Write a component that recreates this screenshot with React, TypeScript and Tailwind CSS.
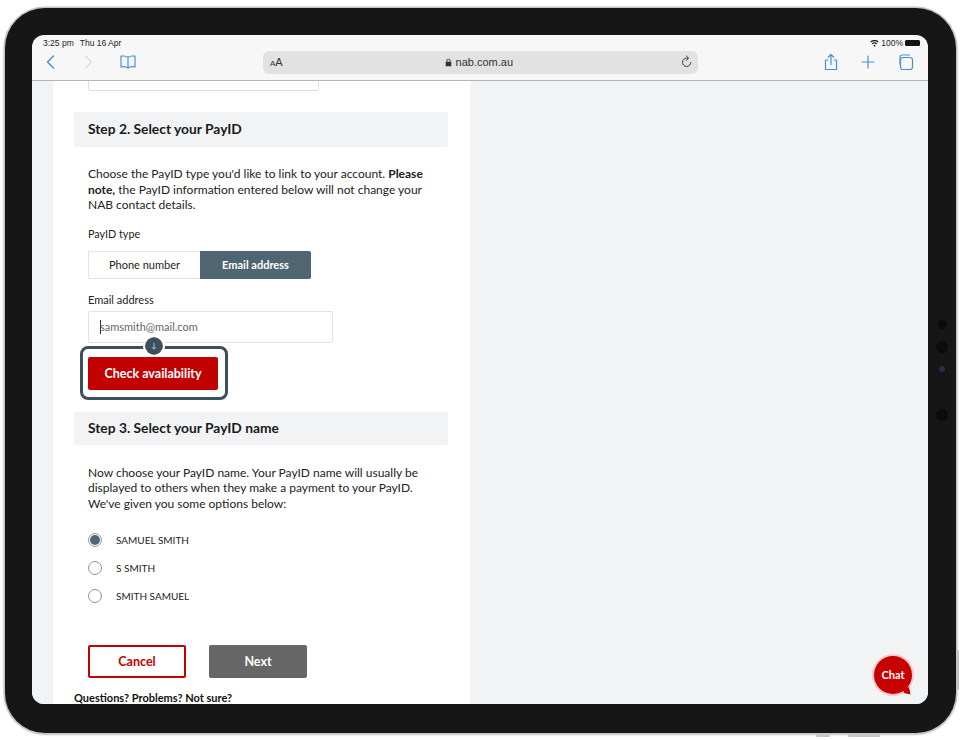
const FONT = "font-['Lato','Noto_Sans',sans-serif]"

function SafariIcon({ children, className }: { children: React.ReactNode; className?: string }) {
  return (
    <svg viewBox="0 0 20 20" fill="none" stroke="currentColor" strokeWidth="1.2" strokeLinecap="round" strokeLinejoin="round" className={className}>
      {children}
    </svg>
  )
}

function StatusBar() {
  return (
    <div className="flex h-[15px] items-center justify-between pl-[11px] pr-[8px] pt-[1px] font-['Liberation_Sans',sans-serif] text-[8.500px] text-[#222]">
      <div className="flex gap-[6px]">
        <span>3:25 pm</span>
        <span>Thu 16 Apr</span>
      </div>
      <div className="flex items-center gap-[2px]">
        <svg viewBox="0 0 12 10" className="h-[7px] w-[9px]" fill="#222">
          <path d="M6 9.500 4.300 7.400a2.600 2.600 0 0 1 3.400 0zM3.300 6.200 2.100 4.800a6 6 0 0 1 7.800 0L8.700 6.200a4.200 4.200 0 0 0-5.400 0zM1.200 3.700 0 2.300a9.200 9.200 0 0 1 12 0l-1.200 1.400a7.400 7.400 0 0 0-9.600 0z" />
        </svg>
        <span>100%</span>
        <span className="h-[6px] w-[15px] rounded-[1.500px] bg-[#111]" />
      </div>
    </div>
  )
}

function Toolbar() {
  return (
    <div className="flex h-[31px] items-center border-b border-[#b5b5b5] bg-[#f7f7f7] pb-[6px] text-[#4a90d9]">
      <div className="flex w-[231px] items-center pl-[9px]">
        <SafariIcon className="h-[20px] w-[20px]">
          <path d="M12.500 4 6.500 10l6 6" strokeWidth="1.500" />
        </SafariIcon>
        <SafariIcon className="ml-[17px] h-[20px] w-[20px] text-[#dcdcdc]">
          <path d="M7.500 4l6 6-6 6" strokeWidth="1.500" />
        </SafariIcon>
        <SafariIcon className="ml-[20px] h-[20px] w-[20px]">
          <path d="M10 5.500C8.500 4 5.500 3.800 3 4.200v10.600c2.500-.4 5.500-.2 7 1.200 1.500-1.400 4.500-1.600 7-1.200V4.200C14.500 3.800 11.500 4 10 5.500zM10 5.500V16" />
        </SafariIcon>
      </div>
      <div className="flex h-[23px] w-[435px] items-center justify-between rounded-[6px] bg-[#e2e2e2] pl-[7px] pr-[3px] text-[#333]">
        <span className="font-['Liberation_Sans',sans-serif] text-[11px] leading-none">
          <span className="text-[8px]">A</span>A
        </span>
        <span className="mr-[4px] flex items-center gap-[4px] font-['Liberation_Sans',sans-serif] text-[11px]">
          <svg viewBox="0 0 10 12" className="h-[9px] w-[7px]" fill="#333">
            <path d="M2 5V3.500a3 3 0 0 1 6 0V5h1v6.500H1V5zm1.200 0h3.600V3.500a1.800 1.800 0 0 0-3.600 0z" />
          </svg>
          nab.com.au
        </span>
        <SafariIcon className="h-[16px] w-[16px]">
          <path d="M14.800 10.500a5.200 5.200 0 1 1-5-5.300h1.500" />
          <path d="M9.200 2.500 12 5.200 9.200 8" />
        </SafariIcon>
      </div>
      <div className="ml-auto flex items-center gap-[17px] pr-[13px]">
        <SafariIcon className="h-[20px] w-[20px]">
          <path d="M6.800 8H4.500v9.500h11V8h-2.300M10 12.500V2.500M7.200 5.200 10 2.500l2.800 2.700" />
        </SafariIcon>
        <SafariIcon className="h-[20px] w-[20px]">
          <path d="M10 4v12M4 10h12" />
        </SafariIcon>
        <SafariIcon className="h-[20px] w-[20px]">
          <path d="M5 12.500V4.800A2 2 0 0 1 7 3h7.500" />
          <rect x="5.500" y="5.500" width="12" height="12" rx="2.500" />
        </SafariIcon>
      </div>
    </div>
  )
}

function StepHeader({ title, className }: { title: string; className: string }) {
  return (
    <div className={`flex items-center rounded-[1px] bg-[#f2f3f5] pl-[14px] text-[13.800px] font-bold text-[#1a1a1a] ${className}`}>
      {title}
    </div>
  )
}

function Radio({ label, checked }: { label: string; checked?: boolean }) {
  return (
    <div className="flex h-[28px] items-center">
      <span className={`flex h-[14px] w-[14px] items-center justify-center rounded-full border bg-white ${checked ? 'border-[#8d9aa3]' : 'border-[#8f9396]'}`}>
        {checked && <span className="h-[10px] w-[10px] rounded-full bg-[#4f6572]" />}
      </span>
      <span className="ml-[14px] text-[10px] text-[#222]">{label}</span>
    </div>
  )
}

function WebPage() {
  return (
    <div className="relative h-[623px] overflow-hidden bg-[#f2f3f5]">
      <div className={`ml-[21px] h-[700px] w-[417px] bg-white pl-[21px] pr-[22px] ${FONT}`}>
        <div className="ml-[14px] h-[10px] w-[231px] rounded-b-[2px] border border-t-0 border-[#dcdee0]" />
        <StepHeader title="Step 2. Select your PayID" className="mt-[21px] h-[35px] pb-[1px]" />
        <p className="mt-[19px] pl-[14px] text-[12px] leading-[15.500px] text-[#222]">
          Choose the PayID type you'd like to link to your account. <b>Please note,</b> the PayID information entered below will not change your NAB contact details.
        </p>
        <p className="mt-[13px] pl-[14px] text-[10.800px] leading-[15px] text-[#222]">PayID type</p>
        <div className="ml-[14px] mt-[10px] flex h-[28px] w-[223px] text-[11px]">
          <div className="flex w-[112px] items-center justify-center rounded-l-[2px] border border-r-0 border-[#e2e4e6] pt-[2px] text-[#222]">Phone number</div>
          <div className="flex flex-1 items-center justify-center rounded-r-[2px] bg-[#4f6572] pt-[2px] font-bold text-white">Email address</div>
        </div>
        <p className="mt-[13px] pl-[14px] text-[11px] leading-[15px] text-[#222]">Email address</p>
        <div className="ml-[14px] mt-[4px] flex h-[32px] w-[245px] items-center rounded-[2px] border border-[#e0e2e4] pl-[11px] pt-[1px] text-[11px] text-[#666]">
          <span className="mr-[-1px] h-[14px] w-[1px] bg-[#333]" />
          samsmith@mail.com
        </div>
        <div className="relative ml-[14px] mt-[14px] flex h-[33px] w-[130px] items-center justify-center rounded-[2px] bg-[#c20000] pt-[2px] text-[12.500px] font-bold text-white">
          Check availability
          <div className="absolute -left-[8px] -right-[10px] -bottom-[10px] -top-[11px] rounded-[8px] border-[3px] border-[#3c4f5c]" />
          <div className="absolute -top-[20px] left-[57px] flex h-[18px] w-[18px] items-center justify-center rounded-full bg-[#3c4f5c] outline-2 outline-white">
            <svg viewBox="0 0 10 10" className="h-[8px] w-[8px]" fill="none" stroke="#cfd6db" strokeWidth="1">
              <path d="M5 1v8M2.500 6.500 5 9l2.500-2.500" />
            </svg>
          </div>
        </div>
        <StepHeader title="Step 3. Select your PayID name" className="mt-[22px] h-[33px] pt-[1px]" />
        <p className="mt-[20px] pl-[14px] text-[12px] leading-[15.500px] text-[#222]">
          Now choose your PayID name. Your PayID name will usually be displayed to others when they make a payment to your PayID. We've given you some options below:
        </p>
        <div className="mt-[15px] pl-[14px]">
          <Radio label="SAMUEL SMITH" checked />
          <Radio label="S SMITH" />
          <Radio label="SMITH SAMUEL" />
        </div>
        <div className="ml-[14px] mt-[35px] flex gap-[23px] text-[12.500px] font-bold">
          <div className="flex h-[33px] w-[98px] items-center justify-center rounded-[2px] border-2 border-[#c20000] pt-[1px] text-[#c20000]">Cancel</div>
          <div className="flex h-[33px] w-[98px] items-center justify-center rounded-[2px] bg-[#666] pt-[1px] text-white">Next</div>
        </div>
        <p className="mt-[12px] text-[11px] font-bold leading-[15px] text-[#111]">Questions? Problems? Not sure?</p>
      </div>
      <div className={`absolute bottom-[10px] right-[16px] h-[38px] w-[38px] rounded-full bg-[#c70000] shadow-[0_0_0_2px_#f3c9c9] ${FONT}`}>
        <div className="flex h-full items-center justify-center text-[11px] font-bold text-white">Chat</div>
        <svg viewBox="0 0 8 8" className="absolute -bottom-[1px] right-[1px] h-[8px] w-[8px]" fill="#c70000">
          <path d="M0 2 6 0 7.500 7.500 1 6z" />
        </svg>
      </div>
    </div>
  )
}

function CameraDots() {
  return (
    <div className="absolute left-[936px] top-[320px] flex w-[12px] flex-col items-center">
      <span className="h-[9px] w-[9px] rounded-full bg-[#0b0b0b]" />
      <span className="mt-[12px] h-[12px] w-[12px] rounded-full bg-[#0b0b0b]" />
      <span className="mt-[13px] h-[6px] w-[6px] rounded-full bg-[#26304a]" />
      <span className="mt-[19px] h-[2px] w-[2px] rounded-full bg-[#0b0b0b]" />
      <span className="mt-[16px] h-[12px] w-[12px] rounded-full bg-[#0b0b0b]" />
    </div>
  )
}

export default function App() {
  return (
    <div className="relative h-[740px] w-[960px] overflow-hidden bg-white pl-[5px] pt-[8px]">
      <div className="h-[725px] w-[951px] rounded-[40px] bg-[#161616] pl-[27px] pt-[27px] shadow-[0_0_0_1.500px_#c4c4c4,0_1px_3px_#999]">
        <div className="h-[669px] w-[896px] overflow-hidden rounded-[12px] bg-[#f7f7f7]">
          <StatusBar />
          <Toolbar />
          <WebPage />
        </div>
      </div>
      <CameraDots />
      {/* side + bottom hardware buttons */}
      <div className="absolute left-[957px] top-[650px] h-[40px] w-[2px] rounded-r-[1px] bg-[#c4c4c4]" />
      <div className="absolute left-[816px] top-[735px] h-[2px] w-[14px] rounded-b-[1px] bg-[#c4c4c4]" />
      <div className="absolute left-[848px] top-[735px] h-[2px] w-[32px] rounded-b-[1px] bg-[#c4c4c4]" />
    </div>
  )
}
